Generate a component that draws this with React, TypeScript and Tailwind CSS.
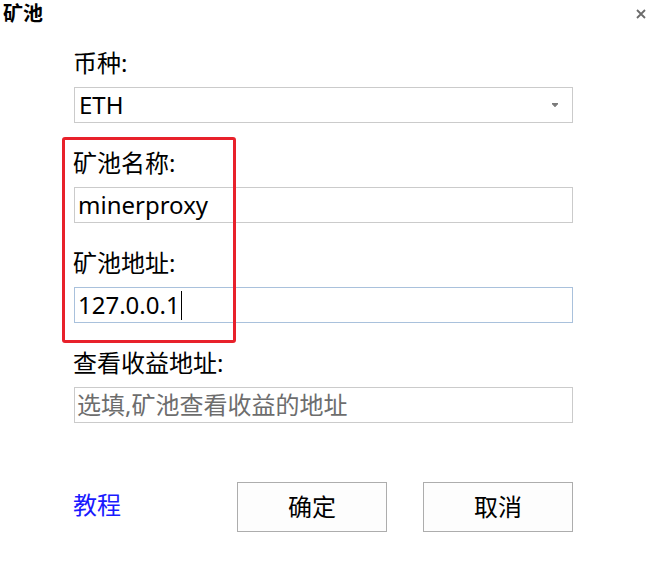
import React from "react";

const cjk = { fontFamily: '"Noto Sans", "Noto Sans CJK SC", sans-serif' };

function Field({ label, children }: { label: string; children: React.ReactNode }) {
  return (
    <div className="flex flex-col">
      <div className="text-[24px] leading-[32px] text-black ml-[-1px]">{label}</div>
      <div className="mt-[8px]">{children}</div>
    </div>
  );
}

export default function App() {
  return (
    <div className="relative w-[655px] h-[574px] bg-white overflow-hidden" style={cjk}>
      <div className="flex items-start justify-between h-[30px]">
        <div className="pl-[3px] pt-[1px] text-[20px] leading-[26px] font-bold text-black">矿池</div>
        <svg className="mr-[9px] mt-[9px]" width="10" height="10" viewBox="0 0 10 10">
          <path d="M1 1L9 9M9 1L1 9" stroke="#6b6b6b" strokeWidth="1.8" />
        </svg>
      </div>
      <div className="flex flex-col w-[499px] ml-[74px] mt-[17px] gap-[24px]">
        <Field label="币种:">
          <div className="flex items-center justify-between h-[36px] border border-[#cbcbcb] pl-[4px] pr-[14px] text-[24px] leading-[34px] text-black">
            <span>ETH</span>
            <svg width="6" height="4" viewBox="0 0 6 4">
              <path d="M0 0.5H6M0.5 1L3 3.8L5.5 1Z" stroke="#7a7a7a" strokeWidth="1" fill="#7a7a7a" />
            </svg>
          </div>
        </Field>
        <Field label="矿池名称:">
          <div className="h-[36px] border border-[#cbcbcb] pl-[3px] text-[24px] leading-[34px] text-black">minerproxy</div>
        </Field>
        <Field label="矿池地址:">
          <div className="flex items-center h-[36px] border border-[#a9c1dc] pl-[3px] text-[24px] leading-[34px] text-black">
            <span>127.0.0.1</span>
            <span className="ml-[1px] w-[1px] h-[29px] bg-black"></span>
          </div>
        </Field>
        <Field label="查看收益地址:">
          <div className="h-[36px] border border-[#cbcbcb] pl-[2px] text-[24px] leading-[34px] text-[#6d6d6d]">选填,矿池查看收益的地址</div>
        </Field>
      </div>
      <div className="flex items-center w-[499px] ml-[74px] mt-[59px]">
        <a className="text-[24px] leading-[32px] text-[#1a1aff] mt-[-4px] ml-[-1px]">教程</a>
        <div className="ml-auto flex gap-[36px]">
          <button className="w-[150px] h-[50px] border border-[#adadad] bg-[#fdfdfd] text-[24px] text-black">确定</button>
          <button className="w-[150px] h-[50px] border border-[#adadad] bg-[#fdfdfd] text-[24px] text-black">取消</button>
        </div>
      </div>
      <div className="absolute left-[62px] top-[137px] w-[174px] h-[206px] border-[3px] border-[#e8212b] rounded-[3px]"></div>
    </div>
  );
}
